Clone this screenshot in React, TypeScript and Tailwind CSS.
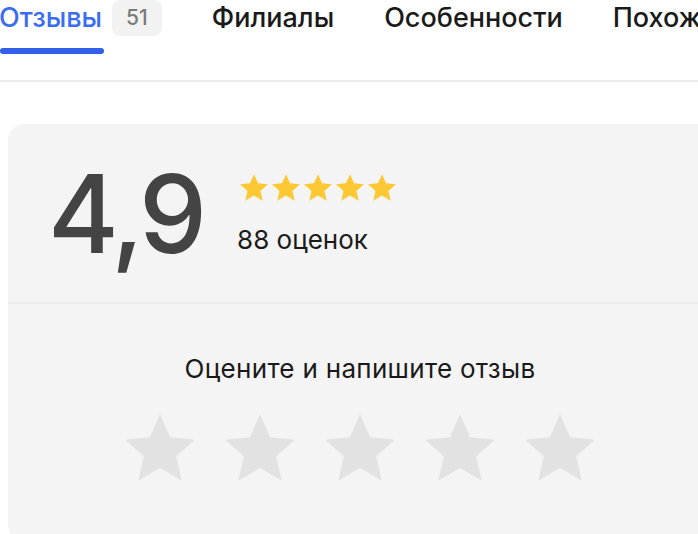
import { Fragment } from "react";

const tabs = ["Филиалы", "Особенности", "Похожие места"];

function Star({ className }: { className: string }) {
  return (
    <svg viewBox="0 0 24 24" className={className}>
      <path
        fill="currentColor"
        d="M12 1.6l3.05 6.9 7.45.72-5.63 4.97 1.65 7.33L12 17.7l-6.52 3.82 1.65-7.33L1.5 9.22l7.45-.72L12 1.6z"
      />
    </svg>
  );
}

export default function App() {
  return (
    <div className="w-[698px] h-[534px] overflow-hidden bg-white font-['Inter',sans-serif]">
      <div className="relative h-[84px] border-b-2 border-[#ebebeb]">
        <div className="flex items-start gap-[50px] whitespace-nowrap -mt-[2px]">
          <div className="relative flex items-start">
            <span className="text-[27px] leading-[40px] font-medium text-[#3a6df0] -ml-[1px]">Отзывы</span>
            <span className="ml-[10px] mt-[2px] h-[36px] px-[14px] rounded-lg bg-[#f2f2f2] text-[#7b7b7b] text-[21px] leading-[36px] font-medium">
              51
            </span>
            <div className="absolute left-0 top-[50px] w-[104px] h-[6px] rounded-full bg-[#3260ea]" />
          </div>
          {tabs.map((t) => (
            <Fragment key={t}>
              <span className="text-[27px] leading-[40px] font-medium text-[#1a1a1a]">{t}</span>
            </Fragment>
          ))}
        </div>
      </div>

      <div className="mt-[42px] ml-[8px] w-[704px] h-[416px] rounded-2xl bg-[#f4f4f4]">
        <div className="h-[180px] flex items-center pl-[40px] border-b-2 border-[#ebebeb]">
          <span className="text-[108px] leading-none font-medium text-[#444] tracking-[-4px] mt-[2px]">4,9</span>
          <div className="ml-[35px] -mt-[2px] flex flex-col">
            <div className="flex text-[#fcc934]">
              {[0, 1, 2, 3, 4].map((i) => (
                <Star key={i} className="w-[32px] h-[32px]" />
              ))}
            </div>
            <span className="mt-[23px] -ml-[1px] text-[26px] leading-none text-[#1a1a1a] tracking-[0px]">88 оценок</span>
          </div>
        </div>
        <div className="flex flex-col items-center pt-[52px]">
          <span className="text-[26px] leading-none text-[#1a1a1a] tracking-[0.3px]">Оцените и напишите отзыв</span>
          <div className="mt-[27px] flex gap-[20px] text-[#e2e2e2]">
            {[0, 1, 2, 3, 4].map((i) => (
              <Star key={i} className="w-[80px] h-[80px]" />
            ))}
          </div>
        </div>
      </div>
    </div>
  );
}
